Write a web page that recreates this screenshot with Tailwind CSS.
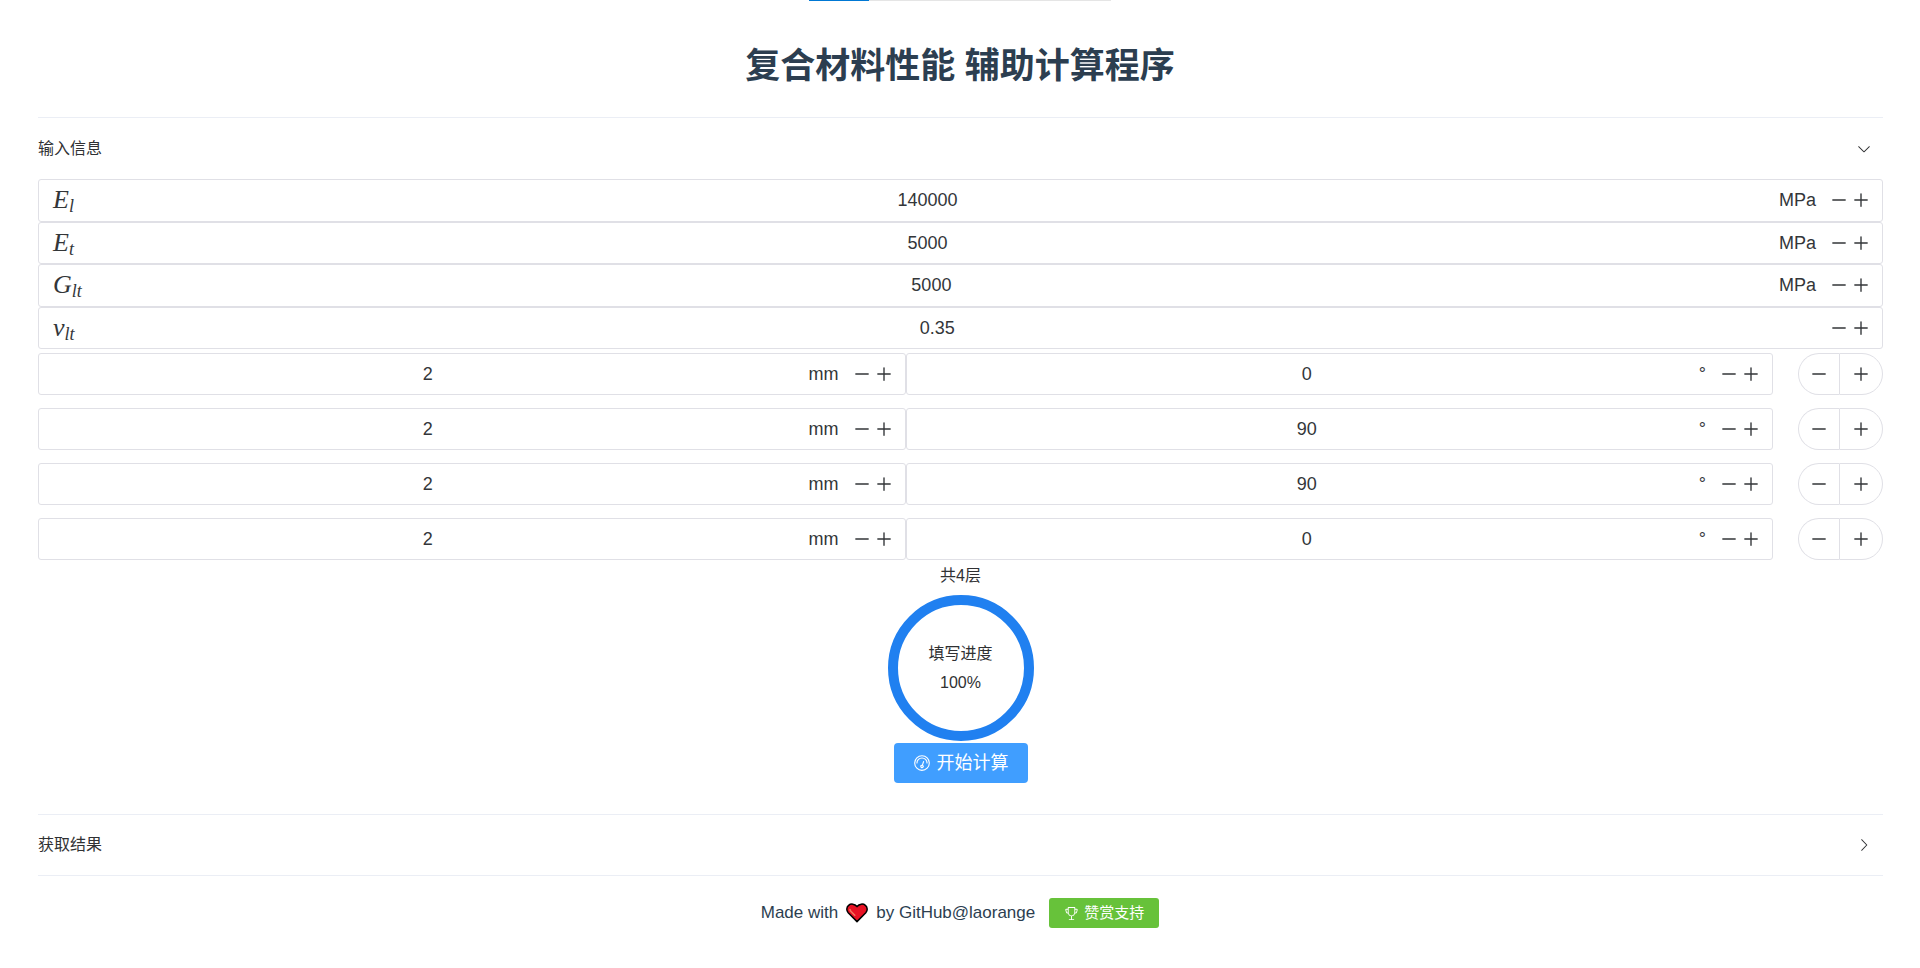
<!DOCTYPE html>
<html lang="zh-CN">
<head>
<meta charset="utf-8">
<meta name="viewport" content="width=device-width, initial-scale=1">
<title>复合材料性能 辅助计算程序</title>
<script src="https://cdn.jsdelivr.net/npm/@tailwindcss/browser@4"></script>
</head>
<body class="min-h-screen bg-white text-base text-[#303133] font-['Liberation_Sans','Noto_Sans_CJK_SC',sans-serif]">
<svg class="hidden" aria-hidden="true">
  <symbol id="minus" viewBox="0 0 512 512"><path d="M112 256H400" fill="none" stroke="currentColor" stroke-width="32" stroke-linecap="round"/></symbol>
  <symbol id="plus" viewBox="0 0 512 512"><path d="M256 112V400M400 256H112" fill="none" stroke="currentColor" stroke-width="32" stroke-linecap="round"/></symbol>
  <symbol id="chevron" viewBox="0 0 1024 1024"><path fill="currentColor" d="M340.864 149.312a30.592 30.592 0 0 0 0 42.752L652.736 512 340.864 831.872a30.592 30.592 0 0 0 0 42.752 29.12 29.12 0 0 0 41.728 0L714.24 534.336a32 32 0 0 0 0-44.672L382.592 149.376a29.12 29.12 0 0 0-41.728 0z"/></symbol>
</svg>

<div class="mx-auto flex h-px w-[302px] bg-[#e5e5e5]"><div class="w-1/5 bg-[#0078d4]"></div></div>

<header class="pt-[41px] pb-[27px]">
  <h1 class="text-center text-[35px] leading-12 font-bold text-[#2c3e50]">复合材料性能 辅助计算程序</h1>
</header>

<main class="mr-[37px] ml-[38px]">
  <section class="border-t border-[#ebeef5]">
    <button type="button" aria-expanded="true" class="flex h-[61px] w-full items-center justify-between pr-[11px] text-left">输入信息<svg class="size-4 rotate-90"><use href="#chevron"/></svg></button>

    <div class="grid h-[170px] grid-rows-4">
      <div class="flex items-center rounded-[3px] border border-[#e0e0e6] pr-[10px] pl-[14px] text-lg text-[#333639]">
        <label for="el" class="mr-[6px] font-['Liberation_Serif',serif] text-[26px] leading-7 italic">E<sub class="static align-[-4px] text-[18px]">l</sub></label>
        <input id="el" value="140000" class="min-w-0 flex-1 text-center outline-none">
        <span class="ml-1 mr-[12px] min-w-[18px]">MPa</span>
        <button type="button" aria-label="减少"><svg class="size-[22px]"><use href="#minus"/></svg></button>
        <button type="button" aria-label="增加"><svg class="size-[22px]"><use href="#plus"/></svg></button>
      </div>
      <div class="flex items-center rounded-[3px] border border-[#e0e0e6] pr-[10px] pl-[14px] text-lg text-[#333639]">
        <label for="et" class="mr-[6px] font-['Liberation_Serif',serif] text-[26px] leading-7 italic">E<sub class="static align-[-4px] text-[18px]">t</sub></label>
        <input id="et" value="5000" class="min-w-0 flex-1 text-center outline-none">
        <span class="ml-1 mr-[12px] min-w-[18px]">MPa</span>
        <button type="button" aria-label="减少"><svg class="size-[22px]"><use href="#minus"/></svg></button>
        <button type="button" aria-label="增加"><svg class="size-[22px]"><use href="#plus"/></svg></button>
      </div>
      <div class="flex items-center rounded-[3px] border border-[#e0e0e6] pr-[10px] pl-[14px] text-lg text-[#333639]">
        <label for="glt" class="mr-[6px] font-['Liberation_Serif',serif] text-[26px] leading-7 italic">G<sub class="static align-[-4px] text-[18px]">lt</sub></label>
        <input id="glt" value="5000" class="min-w-0 flex-1 text-center outline-none">
        <span class="ml-1 mr-[12px] min-w-[18px]">MPa</span>
        <button type="button" aria-label="减少"><svg class="size-[22px]"><use href="#minus"/></svg></button>
        <button type="button" aria-label="增加"><svg class="size-[22px]"><use href="#plus"/></svg></button>
      </div>
      <div class="flex items-center rounded-[3px] border border-[#e0e0e6] pr-[10px] pl-[14px] text-lg text-[#333639]">
        <label for="nlt" class="mr-[6px] font-['Liberation_Serif',serif] text-[26px] leading-7 italic">ν<sub class="static align-[-4px] text-[18px]">lt</sub></label>
        <input id="nlt" value="0.35" class="min-w-0 flex-1 text-center outline-none">
        <span class="ml-1 mr-[12px] min-w-[18px]"></span>
        <button type="button" aria-label="减少"><svg class="size-[22px]"><use href="#minus"/></svg></button>
        <button type="button" aria-label="增加"><svg class="size-[22px]"><use href="#plus"/></svg></button>
      </div>
    </div>

    <div class="mt-1 flex flex-col gap-[13px] text-lg text-[#333639]">
      <div class="flex h-[42px]">
        <div class="flex min-w-0 flex-1 items-center rounded-[3px] border border-[#e0e0e6] pr-[10px] pl-[12px]">
          <input aria-label="第1层厚度" value="2" class="min-w-0 flex-1 text-center outline-none"><span class="ml-1 mr-[12px]">mm</span>
          <button type="button" aria-label="减少"><svg class="size-[22px]"><use href="#minus"/></svg></button><button type="button" aria-label="增加"><svg class="size-[22px]"><use href="#plus"/></svg></button>
        </div>
        <div class="flex min-w-0 flex-1 items-center rounded-[3px] border border-[#e0e0e6] pr-[10px] pl-[12px]">
          <input aria-label="第1层角度" value="0" class="min-w-0 flex-1 text-center outline-none"><span class="ml-1 mr-[12px]">°</span>
          <button type="button" aria-label="减少"><svg class="size-[22px]"><use href="#minus"/></svg></button><button type="button" aria-label="增加"><svg class="size-[22px]"><use href="#plus"/></svg></button>
        </div>
        <div class="ml-[25px] flex w-[85px]">
          <button type="button" aria-label="删除此层" class="flex w-[41px] items-center justify-center rounded-l-full border border-r-0 border-[#e0e0e6]"><svg class="size-[22px]"><use href="#minus"/></svg></button>
          <button type="button" aria-label="添加一层" class="flex flex-1 items-center justify-center rounded-r-full border border-[#e0e0e6]"><svg class="size-[22px]"><use href="#plus"/></svg></button>
        </div>
      </div>
      <div class="flex h-[42px]">
        <div class="flex min-w-0 flex-1 items-center rounded-[3px] border border-[#e0e0e6] pr-[10px] pl-[12px]">
          <input aria-label="第2层厚度" value="2" class="min-w-0 flex-1 text-center outline-none"><span class="ml-1 mr-[12px]">mm</span>
          <button type="button" aria-label="减少"><svg class="size-[22px]"><use href="#minus"/></svg></button><button type="button" aria-label="增加"><svg class="size-[22px]"><use href="#plus"/></svg></button>
        </div>
        <div class="flex min-w-0 flex-1 items-center rounded-[3px] border border-[#e0e0e6] pr-[10px] pl-[12px]">
          <input aria-label="第2层角度" value="90" class="min-w-0 flex-1 text-center outline-none"><span class="ml-1 mr-[12px]">°</span>
          <button type="button" aria-label="减少"><svg class="size-[22px]"><use href="#minus"/></svg></button><button type="button" aria-label="增加"><svg class="size-[22px]"><use href="#plus"/></svg></button>
        </div>
        <div class="ml-[25px] flex w-[85px]">
          <button type="button" aria-label="删除此层" class="flex w-[41px] items-center justify-center rounded-l-full border border-r-0 border-[#e0e0e6]"><svg class="size-[22px]"><use href="#minus"/></svg></button>
          <button type="button" aria-label="添加一层" class="flex flex-1 items-center justify-center rounded-r-full border border-[#e0e0e6]"><svg class="size-[22px]"><use href="#plus"/></svg></button>
        </div>
      </div>
      <div class="flex h-[42px]">
        <div class="flex min-w-0 flex-1 items-center rounded-[3px] border border-[#e0e0e6] pr-[10px] pl-[12px]">
          <input aria-label="第3层厚度" value="2" class="min-w-0 flex-1 text-center outline-none"><span class="ml-1 mr-[12px]">mm</span>
          <button type="button" aria-label="减少"><svg class="size-[22px]"><use href="#minus"/></svg></button><button type="button" aria-label="增加"><svg class="size-[22px]"><use href="#plus"/></svg></button>
        </div>
        <div class="flex min-w-0 flex-1 items-center rounded-[3px] border border-[#e0e0e6] pr-[10px] pl-[12px]">
          <input aria-label="第3层角度" value="90" class="min-w-0 flex-1 text-center outline-none"><span class="ml-1 mr-[12px]">°</span>
          <button type="button" aria-label="减少"><svg class="size-[22px]"><use href="#minus"/></svg></button><button type="button" aria-label="增加"><svg class="size-[22px]"><use href="#plus"/></svg></button>
        </div>
        <div class="ml-[25px] flex w-[85px]">
          <button type="button" aria-label="删除此层" class="flex w-[41px] items-center justify-center rounded-l-full border border-r-0 border-[#e0e0e6]"><svg class="size-[22px]"><use href="#minus"/></svg></button>
          <button type="button" aria-label="添加一层" class="flex flex-1 items-center justify-center rounded-r-full border border-[#e0e0e6]"><svg class="size-[22px]"><use href="#plus"/></svg></button>
        </div>
      </div>
      <div class="flex h-[42px]">
        <div class="flex min-w-0 flex-1 items-center rounded-[3px] border border-[#e0e0e6] pr-[10px] pl-[12px]">
          <input aria-label="第4层厚度" value="2" class="min-w-0 flex-1 text-center outline-none"><span class="ml-1 mr-[12px]">mm</span>
          <button type="button" aria-label="减少"><svg class="size-[22px]"><use href="#minus"/></svg></button><button type="button" aria-label="增加"><svg class="size-[22px]"><use href="#plus"/></svg></button>
        </div>
        <div class="flex min-w-0 flex-1 items-center rounded-[3px] border border-[#e0e0e6] pr-[10px] pl-[12px]">
          <input aria-label="第4层角度" value="0" class="min-w-0 flex-1 text-center outline-none"><span class="ml-1 mr-[12px]">°</span>
          <button type="button" aria-label="减少"><svg class="size-[22px]"><use href="#minus"/></svg></button><button type="button" aria-label="增加"><svg class="size-[22px]"><use href="#plus"/></svg></button>
        </div>
        <div class="ml-[25px] flex w-[85px]">
          <button type="button" aria-label="删除此层" class="flex w-[41px] items-center justify-center rounded-l-full border border-r-0 border-[#e0e0e6]"><svg class="size-[22px]"><use href="#minus"/></svg></button>
          <button type="button" aria-label="添加一层" class="flex flex-1 items-center justify-center rounded-r-full border border-[#e0e0e6]"><svg class="size-[22px]"><use href="#plus"/></svg></button>
        </div>
      </div>
    </div>

    <div class="flex flex-col items-center pt-px pb-[31px]">
      <p class="leading-[29px]">共4层</p>
      <div class="mt-[5px] flex size-[146px] flex-col items-center justify-center rounded-full border-10 border-[#2080f0] leading-[29px]">
        <span>填写进度</span>
        <span>100%</span>
      </div>
      <button type="button" class="mt-[2px] flex h-10 items-center gap-[6px] rounded-[4px] bg-[#409eff] px-[19px] text-lg text-white">
        <svg class="size-[18px]" viewBox="0 0 1024 1024" fill="currentColor"><path d="M512 896a384 384 0 1 0 0-768 384 384 0 0 0 0 768m0 64a448 448 0 1 1 0-896 448 448 0 0 1 0 896"/><path d="M192 512a320 320 0 1 1 640 0 32 32 0 1 1-64 0 256 256 0 1 0-512 0 32 32 0 0 1-64 0"/><path d="M570.432 627.84A96 96 0 1 1 509.568 608l60.992-187.776A32 32 0 1 1 631.424 440l-60.992 187.776zM502.08 734.464a32 32 0 1 0 19.84-60.928 32 32 0 0 0-19.84 60.928"/></svg>开始计算</button>
    </div>
  </section>

  <section class="border-y border-[#ebeef5]">
    <button type="button" aria-expanded="false" class="flex h-[60px] w-full items-center justify-between pr-[11px] text-left">获取结果<svg class="size-4"><use href="#chevron"/></svg></button>
  </section>
</main>

<footer class="mt-[22px] flex items-center justify-center text-[17px] text-[#2c3e50]">
  <span>Made with</span>
  <svg class="mx-2 h-5 w-[22px]" viewBox="0 0 22 20" role="img" aria-label="love"><path d="M11 18.6 2.2 9.8C.2 7.6.4 4.2 2.6 2.4c2.3-2 6-1.7 8.4 1.2C13.4.7 17.1.4 19.4 2.4c2.200 1.800 2.400 5.200.400 7.400z" fill="#e81224" stroke="#000" stroke-width="1.5" stroke-linejoin="round"/><path d="M4 6.500c.200 1 .700 1.700 1.300 2.300l3.500 3.500" fill="none" stroke="#f4775f" stroke-width="1.5" stroke-linecap="round"/></svg>
  <span>by <a href="#">GitHub@laorange</a></span>
  <button type="button" class="ml-[14px] flex h-[30px] items-center gap-[5px] rounded-[3px] bg-[#67c23a] px-[15px] text-[15px] text-white">
    <svg class="size-[15px]" viewBox="0 0 1024 1024" fill="currentColor"><path d="M480 896V702.080A256.256 256.256 0 0 1 264.064 512h-32.640a96 96 0 0 1-91.968-68.416L93.632 290.880a76.800 76.800 0 0 1 73.600-98.880H256V96a32 32 0 0 1 32-32h448a32 32 0 0 1 32 32v96h88.768a76.800 76.800 0 0 1 73.600 98.880L884.480 443.520A96 96 0 0 1 792.576 512h-32.640A256.256 256.256 0 0 1 544 702.080V896h128a32 32 0 1 1 0 64H352a32 32 0 1 1 0-64zm224-448V128H320v320a192 192 0 1 0 384 0m64 0h24.576a32 32 0 0 0 30.656-22.784l45.824-152.768A12.800 12.800 0 0 0 856.768 256H768zm-512 0V256h-88.768a12.800 12.800 0 0 0-12.288 16.448l45.824 152.768A32 32 0 0 0 231.424 448z"/></svg>赞赏支持</button>
</footer>
</body>
</html>
